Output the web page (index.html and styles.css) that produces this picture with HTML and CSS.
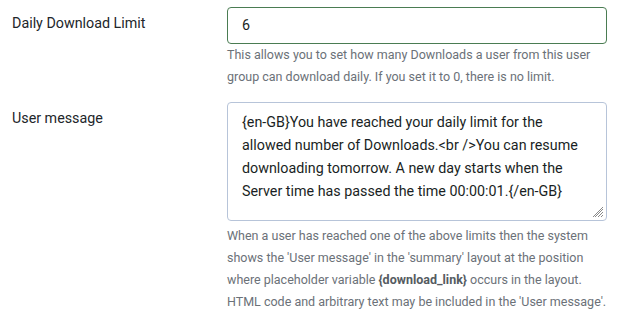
FILE: index.html
```html
<!DOCTYPE html>
<html>
<head>
<meta charset="utf-8">
<link rel="stylesheet" href="styles.css">
</head>
<body>
<div class="form">
  <div class="row">
    <div class="label">Daily Download Limit</div>
    <div class="control">
      <div class="input">6</div>
      <div class="desc">This allows you to set how many Downloads a user from this user group can download daily. If you set it to 0, there is no limit.</div>
    </div>
  </div>
  <div class="row row2">
    <div class="label">User message</div>
    <div class="control">
      <div class="textarea">{en-GB}You have reached your daily limit for the allowed number of Downloads.&lt;br /&gt;You can resume downloading tomorrow. A new day starts when the Server time has passed the time 00:00:01.{/en-GB}
        <svg class="grip" width="11" height="11" viewBox="0 0 11 11"><path d="M10 2 L2 10 M10 5 L5 10 M10 8 L8 10 M10 0 L0 10" stroke="#8a8a8a" stroke-width="1" fill="none"/></svg>
      </div>
      <div class="desc desc2">When a user has reached one of the above limits then the system shows the 'User message' in the 'summary' layout at the position where placeholder variable <b>{download_link}</b> occurs in the layout. HTML code and arbitrary text may be included in the 'User message'.</div>
    </div>
  </div>
</div>
</body>
</html>
```
FILE: styles.css
```css
html, body { margin: 0; padding: 0; background: #fff; }
body { font-family: Roboto, "Noto Sans", sans-serif; color: #22262a; }
.form { padding: 7px 13px 0 12px; }
.row { display: grid; grid-template-columns: 215px 380px; }
.row2 { margin-top: 14px; }
.label { font-size: 14.3px; line-height: 20px; padding-top: 6px; color: #22262a; }
.input {
  box-sizing: border-box; height: 37px; border: 1px solid #4a7c52; border-radius: 4px;
  padding: 0 14px; font-size: 14.3px; line-height: 35px; color: #1a1f24;
}
.desc { font-size: 12.5px; line-height: 22px; color: #6b7178; margin-top: 0; }
.textarea {
  position: relative; box-sizing: border-box; height: 119px; border: 1px solid #b7c4d9; border-radius: 4px;
  padding: 8px 21px 8px 14px; font-size: 14.3px; line-height: 23px; color: #1a1f24;
}
.grip { position: absolute; right: 2px; bottom: 2px; }
.desc2 { margin-top: 4px; }
.desc b { color: #555b61; font-weight: 700; }
```
